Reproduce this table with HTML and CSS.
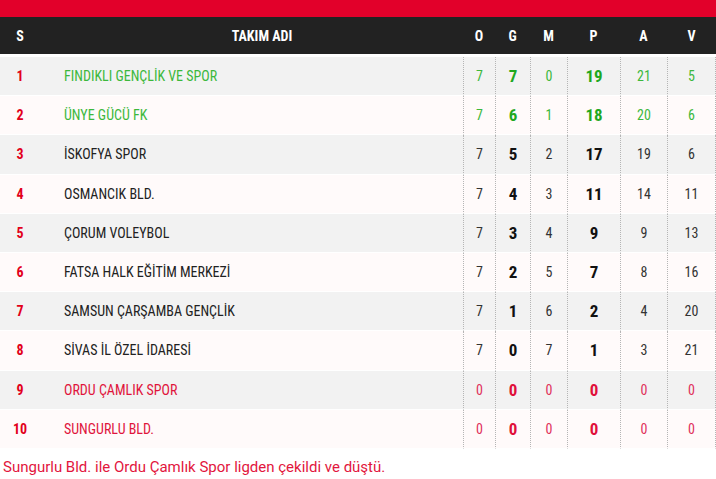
FILE: index.html
```html
<!DOCTYPE html>
<html lang="tr">
<head>
<meta charset="utf-8">
<link rel="stylesheet" href="styles.css">
</head>
<body>
<div class="topbar"></div>
<table class="standings">
  <colgroup>
    <col class="c-s"><col class="c-name"><col class="c-o"><col class="c-g"><col class="c-m"><col class="c-p"><col class="c-a"><col class="c-v">
  </colgroup>
  <thead>
    <tr>
      <th class="s">S</th>
      <th class="name-h">TAKIM ADI</th>
      <th>O</th><th>G</th><th>M</th><th>P</th><th>A</th><th>V</th>
    </tr>
  </thead>
  <tbody>
    <tr class="odd up"><td class="s">1</td><td class="name">FINDIKLI GENÇLİK VE SPOR</td><td class="st">7</td><td class="st b">7</td><td class="st">0</td><td class="st b">19</td><td class="st">21</td><td class="st">5</td></tr>
    <tr class="even up"><td class="s">2</td><td class="name">ÜNYE GÜCÜ FK</td><td class="st">7</td><td class="st b">6</td><td class="st">1</td><td class="st b">18</td><td class="st">20</td><td class="st">6</td></tr>
    <tr class="odd"><td class="s">3</td><td class="name">İSKOFYA SPOR</td><td class="st">7</td><td class="st b">5</td><td class="st">2</td><td class="st b">17</td><td class="st">19</td><td class="st">6</td></tr>
    <tr class="even"><td class="s">4</td><td class="name">OSMANCIK BLD.</td><td class="st">7</td><td class="st b">4</td><td class="st">3</td><td class="st b">11</td><td class="st">14</td><td class="st">11</td></tr>
    <tr class="odd"><td class="s">5</td><td class="name">ÇORUM VOLEYBOL</td><td class="st">7</td><td class="st b">3</td><td class="st">4</td><td class="st b">9</td><td class="st">9</td><td class="st">13</td></tr>
    <tr class="even"><td class="s">6</td><td class="name">FATSA HALK EĞİTİM MERKEZİ</td><td class="st">7</td><td class="st b">2</td><td class="st">5</td><td class="st b">7</td><td class="st">8</td><td class="st">16</td></tr>
    <tr class="odd"><td class="s">7</td><td class="name">SAMSUN ÇARŞAMBA GENÇLİK</td><td class="st">7</td><td class="st b">1</td><td class="st">6</td><td class="st b">2</td><td class="st">4</td><td class="st">20</td></tr>
    <tr class="even"><td class="s">8</td><td class="name">SİVAS İL ÖZEL İDARESİ</td><td class="st">7</td><td class="st b">0</td><td class="st">7</td><td class="st b">1</td><td class="st">3</td><td class="st">21</td></tr>
    <tr class="odd down"><td class="s">9</td><td class="name">ORDU ÇAMLIK SPOR</td><td class="st">0</td><td class="st b">0</td><td class="st">0</td><td class="st b">0</td><td class="st">0</td><td class="st">0</td></tr>
    <tr class="even down"><td class="s">10</td><td class="name">SUNGURLU BLD.</td><td class="st">0</td><td class="st b">0</td><td class="st">0</td><td class="st b">0</td><td class="st">0</td><td class="st">0</td></tr>
  </tbody>
</table>
<p class="note">Sungurlu Bld. ile Ordu Çamlık Spor ligden çekildi ve düştü.</p>
</body>
</html>
```
FILE: styles.css
```css
html, body {
  margin: 0;
  padding: 0;
  background: #ffffff;
}
body {
  font-family: "Roboto Condensed", Roboto, sans-serif;
  font-size: 14px;
  color: #222222;
}
.topbar {
  height: 17px;
  background: #e2002a;
}
.standings {
  width: 716px;
  border-collapse: separate;
  border-spacing: 0;
  table-layout: fixed;
}
.c-s { width: 40px; }
.c-o { width: 32px; }
.c-g { width: 35px; }
.c-m { width: 37px; }
.c-p { width: 53px; }
.c-a { width: 47px; }
.c-v { width: 49px; }

.standings th {
  background: #222222;
  height: 37px;
  box-sizing: content-box;
  color: #ffffff;
  font-weight: 700;
  font-size: 14px;
  text-align: center;
  padding: 0;
  border-bottom: 3px solid #ffffff;
}
.standings th.name-h {
  padding-left: 21px;
}
.standings td {
  height: 38.2px;
  box-sizing: content-box;
  padding: 0;
  border-bottom: 1px solid #ffffff;
  text-align: center;
}
.standings tr.odd td { background: #f2f2f2; }
.standings tr.even td { background: #fffafa; }

.standings td.s {
  color: #e2001a;
  font-weight: 700;
}
.standings td.name {
  text-align: left;
  padding-left: 24px;
  color: #222222;
}
.standings td.st {
  border-left: 1px dotted #b5b5b5;
  color: #333333;
}
.standings td.st:last-child {
  border-right: 1px dotted #b5b5b5;
}
.standings td.st.b {
  font-weight: 700;
  font-size: 17px;
  color: #111111;
}

.standings tr.up td.name,
.standings tr.up td.st { color: #3cb83c; }
.standings tr.up td.st.b { color: #1fa81f; }

.standings tr.down td.name { color: #e0143c; }
.standings tr.down td.st { color: #e0305a; }
.standings tr.down td.st.b { color: #e0103a; }

.note {
  margin: 0;
  padding: 9px 0 0 3px;
  font-family: Roboto, sans-serif;
  font-size: 15px;
  color: #e2163d;
}
```
